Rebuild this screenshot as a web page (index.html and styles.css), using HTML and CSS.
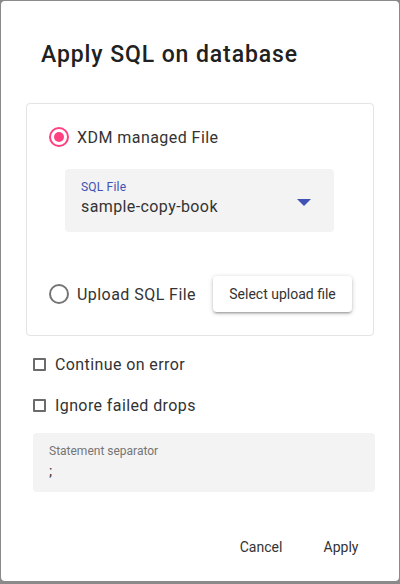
FILE: index.html
```html
<!DOCTYPE html>
<html>
<head>
<meta charset="utf-8">
<link rel="stylesheet" href="styles.css">
</head>
<body>
<div class="dialog">
  <h2 class="title">Apply SQL on database</h2>
  <div class="panel">
    <div class="radio-row first">
      <span class="radio checked"><span class="dot"></span></span>
      <span class="radio-label">XDM managed File</span>
    </div>
    <div class="select">
      <div class="select-label">SQL File</div>
      <div class="select-value">sample-copy-book</div>
      <span class="arrow"></span>
    </div>
    <div class="radio-row second">
      <span class="radio"></span>
      <span class="radio-label">Upload SQL File</span>
      <button class="raised">Select upload file</button>
    </div>
  </div>
  <div class="checks">
    <div class="check-row">
      <span class="checkbox"></span>
      <span class="check-label">Continue on error</span>
    </div>
    <div class="check-row">
      <span class="checkbox"></span>
      <span class="check-label">Ignore failed drops</span>
    </div>
  </div>
  <div class="field">
    <div class="field-label">Statement separator</div>
    <div class="field-value">;</div>
  </div>
  <div class="actions">
    <button class="text-btn">Cancel</button>
    <button class="text-btn">Apply</button>
  </div>
</div>
</body>
</html>
```
FILE: styles.css
```css
html, body {
  margin: 0;
  padding: 0;
}
body {
  background: #8a8a8a;
  font-family: Roboto, "Liberation Sans", sans-serif;
  color: #212121;
  width: 400px;
  height: 584px;
  overflow: hidden;
}
.dialog {
  margin: 1px;
  width: 398px;
  height: 580px;
  background: #fff;
  border-radius: 4px;
  box-sizing: border-box;
  padding: 40px 0 0 25px;
}
.title {
  margin: 0 0 34px 15px;
  font-size: 23px;
  line-height: 28px;
  font-weight: 500;
  letter-spacing: 0.9px;
  color: #212121;
}
.panel {
  width: 348px;
  height: 233px;
  box-sizing: border-box;
  border: 1px solid #e4e4e4;
  border-radius: 4px;
  padding: 13px 0 0 22px;
  box-shadow: 0 0 1px rgba(0,0,0,0.06);
}
.radio-row {
  display: flex;
  align-items: center;
}
.radio-row.first {
  height: 40px;
}
.radio-row.second {
  height: 36px;
  margin-top: 44px;
}
.radio {
  flex-shrink: 0;
  width: 20px;
  height: 20px;
  box-sizing: border-box;
  border: 2px solid #757575;
  border-radius: 50%;
  display: flex;
  align-items: center;
  justify-content: center;
}
.radio.checked {
  border-color: #ff4081;
}
.dot {
  width: 10px;
  height: 10px;
  border-radius: 50%;
  background: #ff4081;
}
.radio-label {
  flex-shrink: 0;
  white-space: nowrap;
  margin-left: 8px;
  font-size: 16px;
  letter-spacing: 0.45px;
  color: #333;
}
.select {
  position: relative;
  margin: 12px 0 0 16px;
  width: 269px;
  height: 63px;
  box-sizing: border-box;
  background: #f3f3f3;
  border-radius: 4px;
  padding: 11px 0 0 16px;
}
.select-label {
  font-size: 12px;
  line-height: 14px;
  color: #3f51b5;
  letter-spacing: 0.2px;
}
.select-value {
  margin-top: 3px;
  font-size: 16px;
  line-height: 20px;
  color: #333;
  letter-spacing: 0.4px;
}
.arrow {
  position: absolute;
  left: 232px;
  top: 30px;
  width: 0;
  height: 0;
  border-left: 7px solid transparent;
  border-right: 7px solid transparent;
  border-top: 7px solid #3f51b5;
}
.raised {
  flex-shrink: 0;
  white-space: nowrap;
  margin-left: 17px;
  height: 36px;
  width: 139px;
  border: none;
  background: #fff;
  border-radius: 4px;
  font-family: Roboto, "Liberation Sans", sans-serif;
  font-size: 14px;
  color: #333;
  padding: 0;
  box-shadow: 0 2px 2px rgba(0,0,0,0.14), 0 3px 1px -2px rgba(0,0,0,0.12), 0 1px 5px rgba(0,0,0,0.2);
}
.checks {
  margin-top: 8px;
}
.check-row {
  display: flex;
  align-items: center;
  height: 41px;
  padding-left: 7px;
}
.checkbox {
  width: 13px;
  height: 13px;
  box-sizing: border-box;
  border: 2px solid #6b6b6b;
  border-radius: 1px;
}
.check-label {
  margin-left: 9px;
  font-size: 16px;
  letter-spacing: 0.4px;
  color: #333;
}
.field {
  margin: 7px 0 0 7px;
  width: 342px;
  height: 59px;
  box-sizing: border-box;
  background: #f3f3f3;
  border-radius: 4px;
  padding: 11px 0 0 16px;
}
.field-label {
  font-size: 12px;
  line-height: 14px;
  color: #757575;
}
.field-value {
  margin-top: 4px;
  font-size: 15px;
  line-height: 18px;
  color: #333;
}
.actions {
  display: flex;
  justify-content: flex-end;
  gap: 16px;
  margin-top: 37px;
  padding-right: 26px;
}
.text-btn {
  min-width: 64px;
  height: 36px;
  border: none;
  background: transparent;
  padding: 0 8px;
  font-family: Roboto, "Liberation Sans", sans-serif;
  font-size: 14px;
  color: #333;
}
```
